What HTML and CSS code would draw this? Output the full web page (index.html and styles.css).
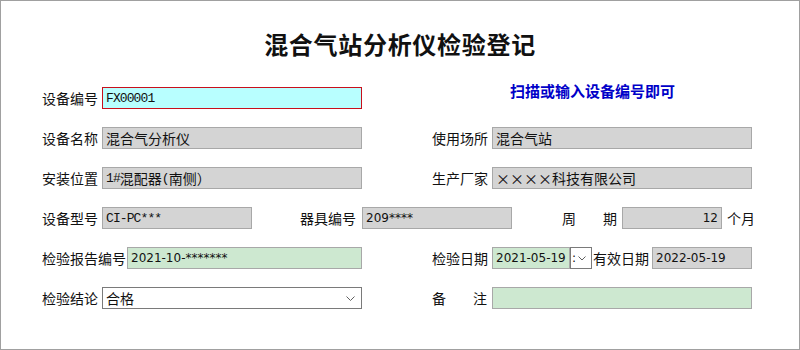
FILE: index.html
```html
<!DOCTYPE html>
<html lang="zh-CN">
<head>
<meta charset="utf-8">
<title>混合气站分析仪检验登记</title>
<link rel="stylesheet" href="styles.css">
</head>
<body>
<div class="frame">
  <h1 class="title">混合气站分析仪检验登记</h1>
  <div class="rows">
    <div class="row">
      <div class="group">
        <span class="lbl">设备编号</span>
        <div class="fld key"><span class="mono">FX00001</span></div>
      </div>
      <div class="group right">
        <span class="note">扫描或输入设备编号即可</span>
      </div>
    </div>

    <div class="row">
      <div class="group">
        <span class="lbl">设备名称</span>
        <div class="fld">混合气分析仪</div>
      </div>
      <div class="group right">
        <span class="lbl">使用场所</span>
        <div class="fld">混合气站</div>
      </div>
    </div>

    <div class="row">
      <div class="group">
        <span class="lbl">安装位置</span>
        <div class="fld"><span class="mono">1#</span>混配器<span class="mono">(</span>南侧）</div>
      </div>
      <div class="group right">
        <span class="lbl">生产厂家</span>
        <div class="fld">××××科技有限公司</div>
      </div>
    </div>

    <div class="row">
      <span class="lbl">设备型号</span>
      <div class="fld w150"><span class="mono">CI-PC***</span></div>
      <span class="lbl lbl-mid">器具编号</span>
      <div class="fld w150"><span class="num">209****</span></div>
      <span class="lbl lbl-spread lbl-cycle"><span>周</span><span>期</span></span>
      <div class="fld w100 end"><span class="num">12</span></div>
      <span class="unit">个月</span>
    </div>

    <div class="row">
      <div class="group">
        <span class="lbl lbl-wide">检验报告编号</span>
        <div class="fld green"><span class="num">2021-10-*******</span></div>
      </div>
      <div class="group right">
        <span class="lbl">检验日期</span>
        <div class="fld green w78"><span class="num">2021-05-19</span></div>
        <div class="dropbtn"><span class="colon">:</span><svg class="chev" width="8" height="5" viewBox="0 0 8 5"><polyline points="0.5,0.5 4,4 7.5,0.5" fill="none" stroke="#606060" stroke-width="1"/></svg></div>
        <span class="lbl lbl-valid">有效日期</span>
        <div class="fld"><span class="num">2022-05-19</span></div>
      </div>
    </div>

    <div class="row">
      <div class="group">
        <span class="lbl">检验结论</span>
        <div class="fld sel"><span>合格</span><svg class="chev" width="9" height="5" viewBox="0 0 9 5"><polyline points="0.5,0.5 4.5,4.5 8.5,0.5" fill="none" stroke="#606060" stroke-width="1"/></svg></div>
      </div>
      <div class="group right">
        <span class="lbl lbl-spread"><span>备</span><span>注</span></span>
        <div class="fld green"></div>
      </div>
    </div>
  </div>
</div>
</body>
</html>
```

FILE: styles.css
```css
html, body {
  margin: 0;
  padding: 0;
  background: #ffffff;
}

body {
  font-family: "Noto Sans CJK SC", "Noto Sans", sans-serif;
  color: #111111;
}

.frame {
  width: 800px;
  height: 350px;
  box-sizing: border-box;
  border: 1px solid #a0a0a0;
  background: #ffffff;
  padding-top: 28px;
}

.title {
  margin: 0;
  height: 30px;
  line-height: 30px;
  text-align: center;
  font-size: 24px;
  font-weight: 700;
  letter-spacing: 0.7px;
  color: #111111;
}

.rows {
  margin-top: 28px;
  display: flex;
  flex-direction: column;
  gap: 18px;
}

.row {
  display: flex;
  align-items: center;
  height: 22px;
  padding-left: 41px;
}

.group {
  display: flex;
  align-items: center;
  width: 320px;
  height: 22px;
}

.group.right {
  margin-left: 70px;
}

.lbl {
  flex: none;
  width: 60px;
  font-size: 14px;
  line-height: 22px;
  white-space: nowrap;
}

.lbl-wide {
  width: 85px;
}

.lbl-mid {
  margin-left: 48px;
  width: 62px;
}

.lbl-spread {
  display: flex;
  justify-content: space-between;
  box-sizing: border-box;
  padding-right: 5px;
}

.lbl-cycle {
  margin-left: 50px;
}

.lbl-valid {
  width: 59px;
  margin-left: 1px;
}

.unit {
  margin-left: 5px;
  font-size: 14px;
  line-height: 22px;
}

.note {
  margin-left: 78px;
  margin-top: -16px;
  font-size: 15px;
  font-weight: 700;
  color: #0000c8;
  white-space: nowrap;
}

.fld {
  flex: 1;
  min-width: 0;
  height: 22px;
  box-sizing: border-box;
  border: 1px solid #a8a8a8;
  background: #d4d4d4;
  display: flex;
  align-items: center;
  padding: 0 3px;
  font-size: 14px;
  white-space: nowrap;
  overflow: hidden;
  color: #111111;
}

.w150 { flex: none; width: 150px; }
.w100 { flex: none; width: 100px; }
.w78 { flex: none; width: 78px; }

.end {
  justify-content: flex-end;
}

.key {
  border-color: #c8101c;
  background: #b8ffff;
}

.green {
  background: #cde8d0;
}

.sel {
  background: #ffffff;
  border-color: #7a7a7a;
  justify-content: space-between;
  padding-right: 6px;
}

.mono {
  font-family: "Liberation Mono", monospace;
  font-size: 13px;
  letter-spacing: -0.9px;
}

.num {
  font-family: "DejaVu Sans", sans-serif;
  font-size: 12px;
}

.dropbtn {
  flex: none;
  width: 22px;
  height: 22px;
  box-sizing: border-box;
  border: 1px solid #7a7a7a;
  background: #ffffff;
  display: flex;
  align-items: center;
  padding-left: 1px;
  gap: 2px;
}

.colon {
  font-family: "DejaVu Sans", sans-serif;
  font-size: 12px;
  line-height: 1;
}

.chev {
  display: block;
  flex: none;
}
```
